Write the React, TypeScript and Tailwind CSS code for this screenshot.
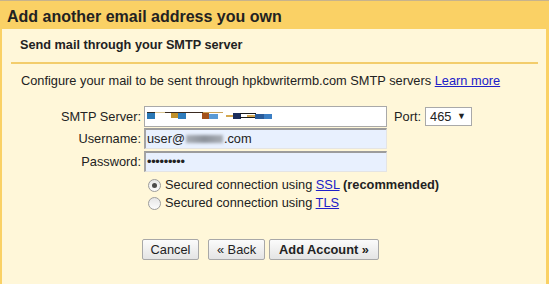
const font = "font-['Liberation_Sans',Arial,sans-serif]";

const Button = ({ children, bold, w }: { children: React.ReactNode; bold?: boolean; w: string }) => (
  <button
    className={`${w} h-[21px] rounded-[2px] border border-[#a8a8a8] bg-gradient-to-b from-[#fbfbfb] to-[#e4e4e4] text-[12.8px] leading-[19px] text-[#222] ${
      bold ? "font-bold" : ""
    }`}
  >
    {children}
  </button>
);

const Radio = ({ checked }: { checked?: boolean }) => (
  <span className="flex h-[13px] w-[13px] items-center justify-center rounded-full border border-[#9c9c9c] bg-gradient-to-b from-[#e6e6e6] to-[#fcfcfc]">
    {checked && <span className="h-[5px] w-[5px] rounded-full bg-[#4a4a4a]" />}
  </span>
);

const Redacted = () => (
  <svg width="130" height="9" viewBox="0 0 130 9" className="block">
    <rect x="0" y="0" width="14" height="1" fill="#2b2b2b" />
    <rect x="8" y="0" width="10" height="1" fill="#d8c490" />
    <rect x="18" y="0" width="38" height="1" fill="#3a2a20" />
    <rect x="56" y="0" width="20" height="1" fill="#c9a25a" />
    <rect x="0" y="1" width="8" height="6" fill="#2a78b5" />
    <rect x="24" y="1" width="7" height="5" fill="#c0902a" />
    <rect x="31" y="1" width="8" height="6" fill="#2f7dbd" />
    <rect x="55" y="1" width="7" height="6" fill="#a4521b" />
    <rect x="62" y="2" width="9" height="5" fill="#5a9ad5" />
    <rect x="79" y="3" width="12" height="2" fill="#d4a850" />
    <rect x="86" y="1" width="8" height="6" fill="#1b2d5c" />
    <rect x="93" y="1" width="16" height="1" fill="#1a1a1a" />
    <rect x="93" y="5" width="16" height="1" fill="#1a1a1a" />
    <rect x="100" y="3" width="9" height="2" fill="#d4a850" />
    <rect x="108" y="2" width="9" height="5" fill="#2a5c9a" />
    <rect x="117" y="2" width="8" height="5" fill="#3b7fc4" />
  </svg>
);

export default function App() {
  return (
    <div className={`${font} flex h-[284px] w-[549px] flex-col border-t border-[#c7b38c] bg-[#fad165] text-[#222]`}>
      <div className="h-[28px] shrink-0 pl-[7px] pt-[6px] text-[16px] font-bold leading-[20px] text-[#222]">
        Add another email address you own
      </div>
      <div className="ml-[2px] mr-[3px] flex-1 bg-[#fff7d9]">
        <div className="pl-[18px] pt-[8px] text-[12.7px] font-bold leading-[16px]">Send mail through your SMTP server</div>
        <div className="ml-[9px] mr-[8px] mt-[9px] h-[2px] bg-[#f3cd6c]" />
        <div className="mt-[9px] pl-[19px] text-[12.8px] leading-[16px]">
          Configure your mail to be sent through hpkbwritermb.com SMTP servers{" "}
          <span className="text-[#2020c8] underline">Learn more</span>
        </div>

        <div className="mt-[17px] flex items-center text-[12.8px]">
          <span className="w-[139px] text-right">SMTP Server:</span>
          <div className="ml-[3px] flex h-[21px] w-[243px] items-center border border-[#a9a9a9] bg-white pl-[2px]">
            <Redacted />
          </div>
          <span className="ml-[7px]">Port:</span>
          <div className="ml-[4px] flex h-[19px] w-[47px] items-center justify-between border border-[#a9a9a9] bg-white pl-[4px] pr-[5px]">
            <span>465</span>
            <span className="text-[9px]">▼</span>
          </div>
        </div>

        <div className="mt-[1px] flex items-center text-[12.8px]">
          <span className="w-[139px] text-right">Username:</span>
          <div className="ml-[3px] flex h-[21px] w-[243px] items-center border-b border-l-2 border-r border-t-2 border-b-[#e4e4e4] border-l-[#a4a4a4] border-r-[#e4e4e4] border-t-[#9c9c9c] bg-[#e8f0fe] pl-[1px]">
            <span>user@</span>
            <span className="mx-[1px] inline-block h-[8px] w-[37px] bg-gradient-to-r from-[#a8adb5] via-[#8c929b] to-[#a8adb5] blur-[1.5px]" />
            <span>.com</span>
          </div>
        </div>

        <div className="mt-[2px] flex items-center text-[12.8px]">
          <span className="w-[139px] text-right">Password:</span>
          <div className="ml-[3px] flex h-[21px] w-[243px] items-center border-b border-l-2 border-r border-t-2 border-b-[#e4e4e4] border-l-[#a4a4a4] border-r-[#e4e4e4] border-t-[#9c9c9c] bg-[#e8f0fe] pl-[1px]">
            <span className="tracking-[-0.3px]">•••••••••</span>
          </div>
        </div>

        <div className="ml-[146px] mt-[4px] flex h-[18px] items-center gap-[4px] text-[12.8px]">
          <Radio checked />
          <span>
            Secured connection using <span className="text-[#2020c8] underline">SSL</span>{" "}
            <span className="font-bold">(recommended)</span>
          </span>
        </div>
        <div className="ml-[146px] flex h-[18px] items-center gap-[4px] text-[12.8px]">
          <Radio />
          <span>
            Secured connection using <span className="text-[#2020c8] underline">TLS</span>
          </span>
        </div>

        <div className="ml-[140px] mt-[27px] flex">
          <Button w="w-[57px]">Cancel</Button>
          <span className="w-[9px]" />
          <Button w="w-[57px]">« Back</Button>
          <span className="w-[4px]" />
          <Button w="w-[110px]" bold>
            Add Account »
          </Button>
        </div>
      </div>
    </div>
  );
}
